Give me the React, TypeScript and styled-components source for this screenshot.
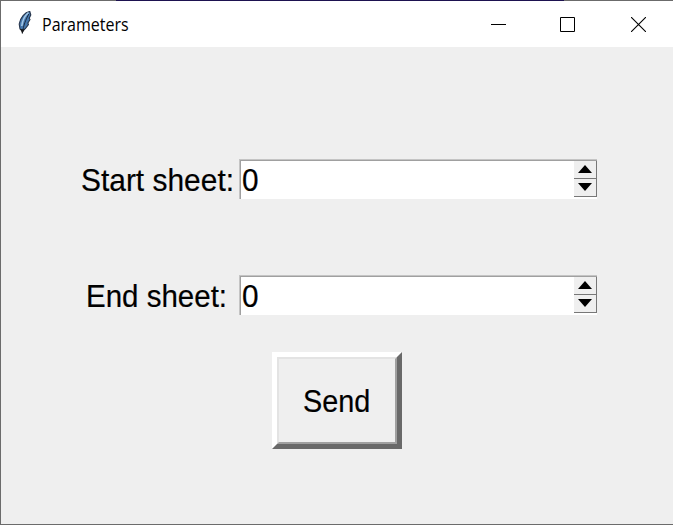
import React from "react";
import styled, { createGlobalStyle } from "styled-components";

const GlobalStyle = createGlobalStyle`
  * { box-sizing: border-box; }
  body { margin: 0; overflow: hidden; }
`;

const Window = styled.div`
  width: 673px;
  height: 525px;
  display: flex;
  flex-direction: column;
  background: #efefef;
  border-left: 1px solid #6b6b6b;
  border-bottom: 1px solid #6b6b6b;
`;

const TopEdge = styled.div`
  height: 1px;
  flex: none;
  background: linear-gradient(to right, #6b6b6b 115px, #1d1250 115px, #1d1250 563px, #6b6b6b 563px);
`;

const TitleBar = styled.header`
  height: 46px;
  flex: none;
  display: flex;
  align-items: center;
  background: #fff;
  padding-left: 15px;

  & > svg { margin-bottom: 2px; }
`;

const Title = styled.h1`
  flex: 1;
  margin: 0 0 0 10px;
  font: 400 17.6px/24px "Open Sans", "Noto Sans", sans-serif;
  color: #000;
`;

const ScaledText = styled.span<{ $x: number }>`
  display: inline-block;
  transform: scaleX(${(p) => p.$x});
  transform-origin: left;
`;

const CaptionButtons = styled.div`
  display: flex;
`;

const CaptionButton = styled.button`
  width: 70px;
  height: 46px;
  padding: 0;
  border: 0;
  background: transparent;
  display: flex;
  align-items: center;
  justify-content: center;

  &:nth-child(2) { padding-right: 2px; }
`;

const Form = styled.main`
  display: flex;
  flex-direction: column;
  padding-top: 112px;
`;

const Row = styled.div`
  display: grid;
  grid-template-columns: 159px 358px;
  margin: 0 0 76px 79px;
  height: 40px;
`;

const Label = styled.label<{ $inset: number }>`
  padding-left: ${(p) => p.$inset}px;
  font: 32px/42px "Liberation Sans", Arial, sans-serif;
  color: #000;
  white-space: nowrap;
  -webkit-text-stroke: 0.2px #000;
`;

const SpinField = styled.div`
  display: flex;
  height: 40px;
  background: #fff;
  border-top: 1px solid #c4c4c4;
  border-left: 1px solid #c4c4c4;
  box-shadow: inset 1px 1px #a0a0a0;
  padding: 1px 0 0 1px;
`;

const Value = styled.span`
  flex: 1;
  padding-left: 1px;
  font: 32px/38px "Liberation Sans", Arial, sans-serif;
  color: #000;
  -webkit-text-stroke: 0.2px #000;
`;

const Arrows = styled.div`
  width: 23px;
  height: 36px;
  display: flex;
  flex-direction: column;
`;

const ArrowButton = styled.button`
  height: 18px;
  padding: 0 1px 1px 0;
  border: 0;
  border-right: 1px solid #777;
  border-bottom: 1px solid #777;
  background: #efefef;
  display: flex;
  align-items: center;
  justify-content: center;
`;

const SendButton = styled.button`
  width: 130px;
  height: 97px;
  margin: -39px 0 0 271px;
  padding: 0;
  border: 5px solid;
  border-color: #fff #696969 #696969 #fff;
  background: #efefef;
`;

const SendFace = styled.span`
  display: block;
  height: 87px;
  padding-left: 24px;
  text-align: left;
  border: 2px solid;
  border-color: #e3e3e3 #a0a0a0 #a0a0a0 #e3e3e3;
  font: 32px/84px "Liberation Sans", Arial, sans-serif;
  color: #000;
  -webkit-text-stroke: 0.2px #000;
`;

const Feather = () => (
  <svg width="16" height="24" viewBox="0 0 16 24">
    <path d="M13.8 0.5C9 1 4.2 7 3.2 13L4 18L6.8 20L9.5 17.5L12.4 13.6L11.9 12L14 8.5L13.2 7.3L14.8 4Z" fill="#4678ae" stroke="#25344a" strokeWidth="1.1" />
    <path d="M12.5 1.5C9 4.5 6.4 10 5.8 15" fill="none" stroke="#a4c8e6" strokeWidth="1.6" />
    <path d="M12.8 3C9.8 8.5 7.5 14 6.3 22.5" fill="none" stroke="#172333" strokeWidth="0.9" />
    <path d="M4.2 18L6.3 22.8L8.5 18.5Z" fill="#18191b" />
  </svg>
);

const Spinner = ({ label, inset, scale }: { label: string; inset: number; scale: number }) => (
  <Row>
    <Label $inset={inset}><ScaledText $x={scale}>{label}</ScaledText></Label>
    <SpinField>
      <Value><ScaledText $x={0.93}>0</ScaledText></Value>
      <Arrows>
        <ArrowButton aria-label="Increase">
          <svg width="14" height="8"><path d="M7 0L14 8H0Z" /></svg>
        </ArrowButton>
        <ArrowButton aria-label="Decrease">
          <svg width="14" height="8"><path d="M0 0H14L7 8Z" /></svg>
        </ArrowButton>
      </Arrows>
    </SpinField>
  </Row>
);

export default function App() {
  return (
    <>
      <GlobalStyle />
      <Window>
        <TopEdge />
        <TitleBar>
          <Feather />
          <Title><ScaledText $x={0.91}>Parameters</ScaledText></Title>
          <CaptionButtons>
            <CaptionButton aria-label="Minimize">
              <svg width="15" height="15"><path d="M0 7.5H15" stroke="#000" /></svg>
            </CaptionButton>
            <CaptionButton aria-label="Maximize">
              <svg width="15" height="15"><path d="M.5 .5H14.5V14.5H.5Z" fill="none" stroke="#000" /></svg>
            </CaptionButton>
            <CaptionButton aria-label="Close">
              <svg width="15" height="15"><path d="M0 0L15 15M15 0L0 15" stroke="#000" strokeWidth="1.1" /></svg>
            </CaptionButton>
          </CaptionButtons>
        </TitleBar>
        <Form>
          <Spinner label="Start sheet:" inset={1} scale={0.935} />
          <Spinner label="End sheet:" inset={6} scale={0.922} />
          <SendButton><SendFace><ScaledText $x={0.9}>Send</ScaledText></SendFace></SendButton>
        </Form>
      </Window>
    </>
  );
}
